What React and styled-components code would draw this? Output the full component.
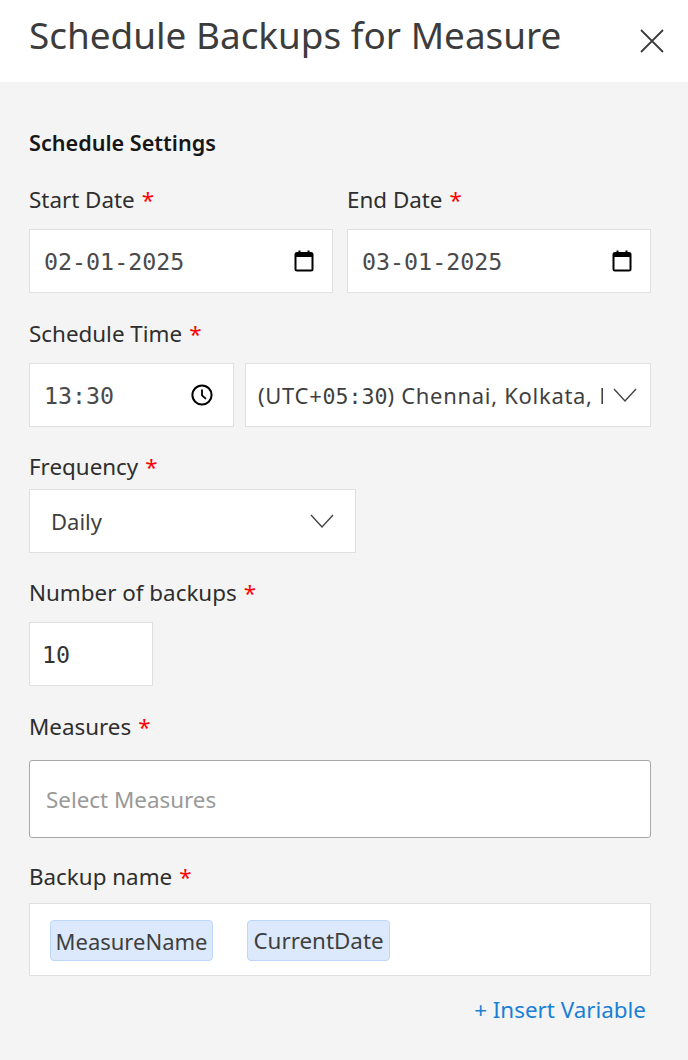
import React from 'react';
import styled, { createGlobalStyle } from 'styled-components';

const GlobalStyle = createGlobalStyle`
  html, body {
    margin: 0;
    padding: 0;
    background: #f4f4f4;
  }
  * { box-sizing: border-box; }
`;

const sans = `'Noto Sans', 'Lato', sans-serif`;
const mono = `'DejaVu Sans Mono', monospace`;

const Panel = styled.div`
  width: 688px;
  height: 1060px;
  overflow: hidden;
  background: #f4f4f4;
  font-family: ${sans};
`;

const Header = styled.header`
  height: 82px;
  background: #fff;
  display: flex;
  justify-content: space-between;
  padding: 0 23px 0 29px;
`;

const Title = styled.h1`
  margin: 0;
  font-size: 36.9px;
  line-height: 70px;
  font-weight: 400;
  color: #3c3c3c;
  white-space: nowrap;
`;

const CloseButton = styled.button`
  border: 0;
  background: none;
  padding: 0;
  width: 26px;
  height: 26px;
  margin-top: 27px;
`;

const Body = styled.div`
  padding: 46px 37px 0 29px;
`;

const SectionTitle = styled.h2`
  margin: 0 0 27px;
  font-size: 21.6px;
  line-height: 30px;
  font-weight: 600;
  color: #161616;
  transform: translateY(-0.5px);
`;

const Row = styled.div`
  display: flex;
  gap: ${p => p.$gap || 14}px;
`;

const Field = styled.div`
  margin-bottom: ${p => p.$mb ?? 26}px;
  width: ${p => (p.$width ? `${p.$width}px` : 'auto')};
`;

const Label = styled.div`
  font-size: 22.4px;
  line-height: 29px;
  color: #2e2e2e;
  white-space: nowrap;
  margin-bottom: ${p => p.$mb ?? 15}px;
`;

const Star = styled.span`
  color: #f00;
  margin-left: 7px;
`;

const Box = styled.div`
  height: 64px;
  width: ${p => (p.$width ? `${p.$width}px` : 'auto')};
  flex: ${p => (p.$width ? 'none' : 1)};
  background: #fff;
  border: 1px solid #e0e0e0;
  display: flex;
  align-items: center;
  justify-content: space-between;
`;

const MonoValue = styled.span`
  font-family: ${mono};
  font-size: 23.3px;
  color: ${p => p.$color || '#4a4a4a'};
  margin-left: ${p => p.$left ?? 14}px;
`;

const PickerIcon = styled.svg`
  width: 24px;
  height: 24px;
  margin-right: ${p => p.$right ?? 16}px;
  flex: none;
`;

const SelectText = styled.span`
  font-size: 22px;
  color: #3f3f3f;
  letter-spacing: ${p => p.$spacing ?? 0}px;
  margin-left: ${p => p.$left}px;
  white-space: nowrap;
  overflow: hidden;
  width: ${p => (p.$width ? `${p.$width}px` : 'auto')};
`;

const Digits = styled.span`
  font-family: ${mono};
  font-size: 21.6px;
  letter-spacing: 0;
`;

const Chevron = styled.svg`
  width: 26px;
  height: 16px;
  margin-right: ${p => p.$right}px;
  flex: none;
`;

const MeasureBox = styled.div`
  height: 78px;
  background: #fff;
  border: 1px solid #a8a8a8;
  border-radius: 3px;
  display: flex;
  align-items: center;
  padding-left: 16px;
  font-size: 22.4px;
  color: #999;
`;

const NameBox = styled.div`
  height: 73px;
  background: #fff;
  border: 1px solid #e0e0e0;
  display: flex;
  align-items: center;
  gap: 34px;
  padding: 2px 0 0 20px;
`;

const Chip = styled.span`
  width: ${p => p.$width}px;
  height: 41px;
  display: flex;
  align-items: center;
  justify-content: center;
  background: #dce9fd;
  border: 1px solid #bcd7f9;
  border-radius: 4px;
  font-size: ${p => p.$size}px;
  color: #3f3f3f;
`;

const InsertLink = styled.div`
  text-align: right;
  padding-right: 5px;
  margin-top: 19px;
  font-size: 22.4px;
  line-height: 29px;
  color: #1a80d6;
`;

const CalendarIcon = () => (
  <PickerIcon viewBox="0 0 24 24">
    <path d="M7.5 1.5v4M16.5 1.5v4" stroke="#000" strokeWidth="2" fill="none" />
    <rect x="2.5" y="3" width="19" height="19.5" rx="2.5" fill="#000" />
    <rect x="4.5" y="8" width="15" height="12.5" fill="#fff" />
  </PickerIcon>
);

const ClockIcon = () => (
  <PickerIcon $right={19} viewBox="0 0 24 24">
    <circle cx="12" cy="12" r="9.6" fill="none" stroke="#000" strokeWidth="2" />
    <path d="M12 6.5V12.3l4 3.6" fill="none" stroke="#000" strokeWidth="1.8" />
  </PickerIcon>
);

const ChevronIcon = ({ right }) => (
  <Chevron $right={right} viewBox="0 0 26 16">
    <path d="M2 2l11 12L24 2" fill="none" stroke="#444" strokeWidth="1.4" />
  </Chevron>
);

const Required = () => <Star>*</Star>;

export default function App() {
  return (
    <Panel>
      <GlobalStyle />
      <Header>
        <Title>Schedule Backups for Measure</Title>
        <CloseButton aria-label="Close">
          <svg width="26" height="26" viewBox="0 0 26 26">
            <path d="M2 3l22 22M24 3L2 25" stroke="#3c3c3c" strokeWidth="1.8" fill="none" />
          </svg>
        </CloseButton>
      </Header>
      <Body>
        <SectionTitle>Schedule Settings</SectionTitle>
        <Row>
          <Field $width={304}>
            <Label $mb={15}>Start Date<Required /></Label>
            <Box>
              <MonoValue>02-01-2025</MonoValue>
              <CalendarIcon />
            </Box>
          </Field>
          <Field $width={304}>
            <Label $mb={15}>End Date<Required /></Label>
            <Box>
              <MonoValue>03-01-2025</MonoValue>
              <CalendarIcon />
            </Box>
          </Field>
        </Row>
        <Field $mb={25}>
          <Label>Schedule Time<Required /></Label>
          <Row $gap={11}>
            <Box $width={205}>
              <MonoValue>13:30</MonoValue>
              <ClockIcon />
            </Box>
            <Box>
              <SelectText $left={12} $width={345} $spacing={0.7}>
                (UTC+<Digits>05:30</Digits>) Chennai, Kolkata, Mumbai
              </SelectText>
              <ChevronIcon right={12} />
            </Box>
          </Row>
        </Field>
        <Field $width={327} $mb={25}>
          <Label $mb={8}>Frequency<Required /></Label>
          <Box>
            <SelectText $left={21}>Daily</SelectText>
            <ChevronIcon right={20} />
          </Box>
        </Field>
        <Field $width={124}>
          <Label>Number of backups<Required /></Label>
          <Box>
            <MonoValue $left={12} $color="#333">10</MonoValue>
          </Box>
        </Field>
        <Field $mb={24}>
          <Label $mb={19}>Measures<Required /></Label>
          <MeasureBox>Select Measures</MeasureBox>
        </Field>
        <Field $mb={0}>
          <Label $mb={12}>Backup name<Required /></Label>
          <NameBox>
            <Chip $width={163} $size={22}>MeasureName</Chip>
            <Chip $width={143} $size={22.4}>CurrentDate</Chip>
          </NameBox>
        </Field>
        <InsertLink>+ Insert Variable</InsertLink>
      </Body>
    </Panel>
  );
}
